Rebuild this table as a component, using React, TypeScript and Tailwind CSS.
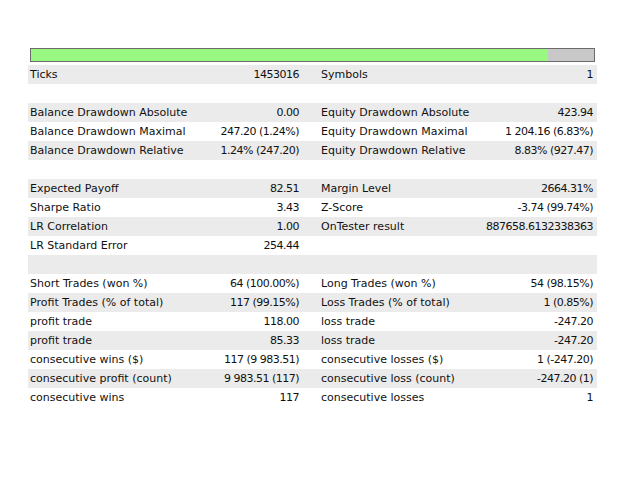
const rows: [string, string, string, string][] = [
  ["Ticks", "1453016", "Symbols", "1"],
  ["", "", "", ""],
  ["Balance Drawdown Absolute", "0.00", "Equity Drawdown Absolute", "423.94"],
  ["Balance Drawdown Maximal", "247.20 (1.24%)", "Equity Drawdown Maximal", "1 204.16 (6.83%)"],
  ["Balance Drawdown Relative", "1.24% (247.20)", "Equity Drawdown Relative", "8.83% (927.47)"],
  ["", "", "", ""],
  ["Expected Payoff", "82.51", "Margin Level", "2664.31%"],
  ["Sharpe Ratio", "3.43", "Z-Score", "-3.74 (99.74%)"],
  ["LR Correlation", "1.00", "OnTester result", "887658.6132338363"],
  ["LR Standard Error", "254.44", "", ""],
  ["", "", "", ""],
  ["Short Trades (won %)", "64 (100.00%)", "Long Trades (won %)", "54 (98.15%)"],
  ["Profit Trades (% of total)", "117 (99.15%)", "Loss Trades (% of total)", "1 (0.85%)"],
  ["profit trade", "118.00", "loss trade", "-247.20"],
  ["profit trade", "85.33", "loss trade", "-247.20"],
  ["consecutive wins ($)", "117 (9 983.51)", "consecutive losses ($)", "1 (-247.20)"],
  ["consecutive profit (count)", "9 983.51 (117)", "consecutive loss (count)", "-247.20 (1)"],
  ["consecutive wins", "117", "consecutive losses", "1"],
];

const App = () => {
  return (
    <div className="w-[640px] h-[480px] bg-white text-[11px] text-[#111] font-['DejaVu_Sans',sans-serif] pt-[48px]">
      {/* progress */}
      <div className="ml-[30px] w-[565px] h-[14px] border border-[#6b6b6b] bg-[#c8c8c8] flex">
        <div className="w-[517px] h-full bg-[#98f882]" />
      </div>
      <div className="ml-[28px] w-[569px] mt-[3px] flex flex-col">
        {rows.map((r, i) => (
          <div
            key={i}
            className={`h-[19px] pt-[2px] flex items-center ${i % 2 === 0 ? "bg-[#ebebeb]" : "bg-white"}`}
          >
            <div className="w-[130px] pl-[2px] whitespace-nowrap">{r[0]}</div>
            <div className="w-[141px] text-right whitespace-nowrap tracking-[-0.5px]">{r[1]}</div>
            <div className="w-[50px] pl-[22px] whitespace-nowrap">{r[2]}</div>
            <div className="flex-1 text-right pr-[4px] whitespace-nowrap tracking-[-0.5px]">{r[3]}</div>
          </div>
        ))}
      </div>
    </div>
  );
};

export default App;
